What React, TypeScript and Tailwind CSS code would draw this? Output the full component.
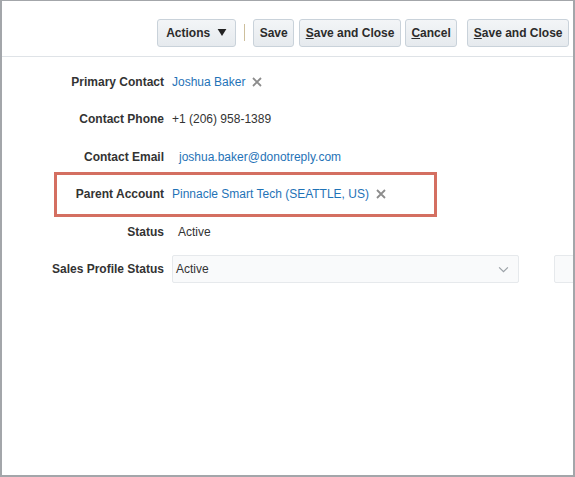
import { type ReactNode } from "react";

const font = { fontFamily: '"Liberation Sans", Arial, sans-serif' };

export default function App() {
  return (
    <div
      className="flex h-[477px] w-[575px] flex-col overflow-hidden border-x-2 border-t border-b-2 border-[#a3a6aa] bg-white text-[12px] text-[#333]"
      style={font}
    >
      <div className="flex h-[56px] shrink-0 items-center justify-end border-b border-[#dfe3e7] pr-[4px] pt-[8px]">
        <ToolButton pad="px-[8px]">
          Actions
          <svg viewBox="0 0 10 8" className="ml-[7px] h-[7px] w-[10px]">
            <path d="M0 0h10L5 8z" fill="#222" />
          </svg>
        </ToolButton>
        <span className="mx-[8px] h-[17px] w-px bg-[#cdbf9c]" />
        <ToolButton>Save</ToolButton>
        <ToolButton className="ml-[5px]">
          <u>S</u>ave and Close
        </ToolButton>
        <ToolButton className="ml-[4px]">
          <u>C</u>ancel
        </ToolButton>
        <ToolButton className="ml-[10px]">
          <u>S</u>ave and Close
        </ToolButton>
      </div>

      <div className="flex flex-col pt-[6px]">
        <Row label="Primary Contact">
          <span className="text-[#1f73b7]">Joshua Baker</span>
          <ClearIcon />
        </Row>
        <Row label="Contact Phone">
          <span>+1 (206) 958-1389</span>
        </Row>
        <Row label="Contact Email">
          <span className="ml-[7px] text-[#1f73b7]">joshua.baker@donotreply.com</span>
        </Row>
        <div className="relative">
          <span className="pointer-events-none absolute left-[52px] top-[-4px] h-[45px] w-[383px] border-[3px] border-[#d46f61]" />
          <Row label="Parent Account">
            <span className="text-[#1f73b7]">Pinnacle Smart Tech (SEATTLE, US)</span>
            <ClearIcon />
          </Row>
        </div>
        <Row label="Status">
          <span className="ml-[6px]">Active</span>
        </Row>
        <Row label="Sales Profile Status">
          <div className="flex h-[28px] w-[347px] shrink-0 items-center justify-between rounded-[2px] border border-[#e6e9ec] bg-[#f9fafb] pl-[3px] pr-[9px]">
            <span>Active</span>
            <svg viewBox="0 0 12 8" className="h-[7px] w-[11px]">
              <path d="M1 1.5l5 5 5-5" fill="none" stroke="#9ba1a7" strokeWidth="1.4" />
            </svg>
          </div>
          <div className="ml-[35px] h-[28px] w-[40px] shrink-0 rounded-[2px] border border-[#e6e9ec] bg-[#f9fafb]" />
        </Row>
      </div>
    </div>
  );
}

function ToolButton({
  children,
  className = "",
  pad = "px-[5.5px]",
}: {
  children: ReactNode;
  className?: string;
  pad?: string;
}) {
  return (
    <button
      className={`flex h-[28px] shrink-0 items-center whitespace-nowrap rounded-[3px] border border-[#c9d2da] bg-gradient-to-b from-[#f3f5f7] to-[#e6eaee] text-[12px] font-bold text-[#2b2b2b] ${pad} ${className}`}
    >
      {children}
    </button>
  );
}

function Row({ label, children }: { label: string; children: ReactNode }) {
  return (
    <div className="flex h-[37.5px] items-center overflow-hidden">
      <div className="w-[162px] shrink-0 text-right font-bold text-[#333]">{label}</div>
      <div className="ml-[8px] flex items-center">{children}</div>
    </div>
  );
}

function ClearIcon() {
  return (
    <svg viewBox="0 0 10 10" className="ml-[7px] h-[10px] w-[10px]">
      <path d="M1 1l8 8M9 1l-8 8" stroke="#8c8c8c" strokeWidth="1.8" />
    </svg>
  );
}
